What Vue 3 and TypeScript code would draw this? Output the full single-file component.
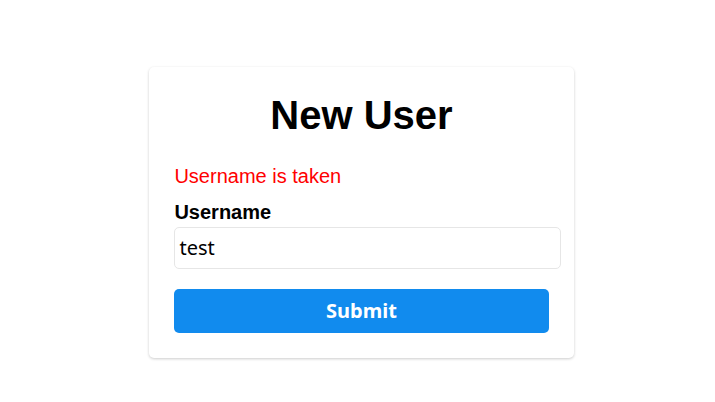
<script setup lang="ts">
import { ref } from 'vue'

const username = ref('test')
const error = ref('Username is taken')
</script>

<template>
  <main class="page">
    <form class="card" @submit.prevent>
      <h1 class="title">New User</h1>
      <p v-if="error" id="username-error" class="error" role="alert">{{ error }}</p>
      <label class="label" for="username">Username</label>
      <input id="username" v-model="username" class="input" type="text" aria-describedby="username-error" />
      <button class="submit" type="submit">Submit</button>
    </form>
  </main>
</template>

<style>
body {
  background: #fff;
}
</style>

<style scoped>
.page {
  display: flex;
  align-items: center;
  justify-content: center;
  min-height: 100vh;
  padding: 22px 0 0 8px;
  box-sizing: border-box;
  color: #000;
  font-family: "Liberation Sans", Arial, sans-serif;
}

.card {
  display: flex;
  flex-direction: column;
  width: 60%;
  max-width: 425px;
  box-sizing: border-box;
  padding: 24px 25px 25px;
  border-radius: 5px;
  background: #fff;
  box-shadow: 0 1px 3px rgba(0, 0, 0, 0.2);
}

.title {
  margin: 0 0 25px;
  font-size: 40px;
  line-height: 48px;
  font-weight: 700;
  text-align: center;
}

.error {
  margin: 0 0 12px;
  color: #f00;
  font-size: 20px;
  line-height: 24px;
}

.label {
  font-size: 20px;
  line-height: 24px;
  font-weight: 700;
}

.input {
  width: calc(100% + 12px);
  height: 42px;
  margin: 3px 0 20px;
  padding: 0 4px;
  box-sizing: border-box;
  border: 1px solid #e6e6e6;
  border-radius: 5px;
  color: #000;
  background: #fff;
  font-family: "Noto Sans", sans-serif;
  font-size: 20px;
}

.submit {
  height: 44px;
  padding: 0;
  border: 0;
  border-radius: 5px;
  color: #fff;
  background: #118bee;
  font-family: "Noto Sans", sans-serif;
  font-size: 20px;
  font-weight: 700;
}
</style>
